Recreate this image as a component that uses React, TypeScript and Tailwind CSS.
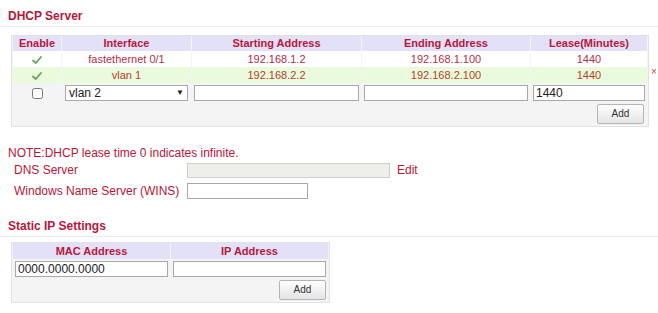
import React from "react"

// DHCP server settings page
const red = "text-[#b8163a]"

function Check() {
  return (
    <svg width="10" height="8" viewBox="0 0 10 8" className="inline-block align-middle">
      <path d="M1 4.5 L3.8 7 L9 1" fill="none" stroke="#6aa35a" strokeWidth="1.8" strokeLinecap="round" strokeLinejoin="round" />
    </svg>
  )
}

function AddButton() {
  return (
    <button className="block ml-auto h-[20px] w-[47px] rounded-[2px] border border-[#b4b4b4] bg-gradient-to-b from-white to-[#e4e4e4] text-[10px] leading-[18px] text-[#333]">
      Add
    </button>
  )
}

const inputCls = "block h-[16px] w-full border border-[#a9a9a9] bg-white px-[2px] text-[12px] leading-[14px] text-[#222] outline-none"

export default function App() {
  const th = `bg-[#e3e1f7] text-[11px] font-bold ${red} h-[15px] leading-[15px] text-center p-0`
  const td = "text-[11px] text-center h-[16px] leading-[16px] text-[#b03048] p-0"
  const td2 = "text-[11px] text-center h-[16px] leading-[16px] text-[#b8402e] p-0"
  return (
    <div className="w-[658px] h-[313px] bg-white font-['Liberation_Sans',Arial,sans-serif] overflow-hidden">
      {/* DHCP Server */}
      <div className="border-b border-[#ececec] pl-[8px] pt-[9px] pb-[3px]">
        <h2 className={`text-[12px] font-bold ${red} leading-[14px]`}>DHCP Server</h2>
      </div>

      <div className="relative ml-[11px] mt-[8px] w-[638px] border border-[#e2e2e2] bg-[#f4f4f4]">
        <table className="w-full table-fixed border-separate border-spacing-x-[1px] border-spacing-y-0 text-[12px] leading-[14px]">
          <colgroup>
            <col className="w-[48px]" />
            <col className="w-[129px]" />
            <col className="w-[169px]" />
            <col className="w-[168px]" />
            <col />
          </colgroup>
          <thead>
            <tr>
              <th className={th}>Enable</th>
              <th className={th}>Interface</th>
              <th className={th}>Starting Address</th>
              <th className={th}>Ending Address</th>
              <th className={th}>Lease(Minutes)</th>
            </tr>
          </thead>
          <tbody>
            <tr className="bg-white">
              <td className={td}><Check /></td>
              <td className={td}>fastethernet 0/1</td>
              <td className={td}>192.168.1.2</td>
              <td className={td}>192.168.1.100</td>
              <td className={td}>1440</td>
            </tr>
            <tr className="bg-[#e9fbdc]">
              <td className={td2}><Check /></td>
              <td className={td2}>vlan 1</td>
              <td className={td2}>192.168.2.2</td>
              <td className={td2}>192.168.2.100</td>
              <td className={td2}>1440</td>
            </tr>
            <tr>
              <td className="h-[19px] p-0 text-center align-middle leading-none">
                <input type="checkbox" className="h-[11px] w-[11px] align-middle accent-[#ccc]" />
              </td>
              <td className="h-[19px] px-[3px] py-0 align-middle">
                <div className="flex h-[16px] items-center justify-between border border-[#a9a9a9] bg-white px-[3px] text-[12px] text-[#222]">
                  <span>vlan 2</span>
                  <span className="text-[8px]">▼</span>
                </div>
              </td>
              <td className="h-[19px] px-[2px] py-0 align-middle"><input className={inputCls} /></td>
              <td className="h-[19px] px-[2px] py-0 align-middle"><input className={inputCls} /></td>
              <td className="h-[19px] px-[2px] py-0 align-middle"><input className={inputCls} defaultValue="1440" /></td>
            </tr>
            <tr>
              <td colSpan={5} className="h-[24px] p-0 pr-[3px] align-middle">
                <AddButton />
              </td>
            </tr>
          </tbody>
        </table>
        <span className="absolute left-[639px] top-[30px] text-[10px] leading-[12px] text-[#d04040]">×</span>
      </div>

      {/* notes and DNS */}
      <p className="mt-[19px] pl-[8px] text-[12px] leading-[14px] text-[#b8163a]">NOTE:DHCP lease time 0 indicates infinite.</p>
      <div className="mt-[1px] flex items-center pl-[14px] text-[12px] text-[#b8163a]">
        <span className="w-[173px]">DNS Server</span>
        <div className="h-[15px] w-[203px] border border-[#cfcfcf] bg-[#eeeeea]" />
        <span className="ml-[7px]">Edit</span>
      </div>
      <div className="mt-[3px] flex items-center pl-[14px] text-[12px] text-[#b8163a]">
        <span className="w-[173px]">Windows Name Server (WINS)</span>
        <div className="h-[16px] w-[121px] border border-[#a9a9a9] bg-white" />
      </div>

      {/* Static IP */}
      <div className="mt-[19px] border-b border-[#ececec] pl-[8px] pb-[3px]">
        <h2 className={`text-[12px] font-bold ${red} leading-[14px]`}>Static IP Settings</h2>
      </div>
      <div className="ml-[11px] mt-[5px] w-[319px] border border-[#e2e2e2] bg-[#f4f4f4]">
        <table className="w-full table-fixed border-separate border-spacing-x-[1px] border-spacing-y-0 text-[12px] leading-[14px]">
          <thead>
            <tr>
              <th className={`${th} h-[16px]`}>MAC Address</th>
              <th className={`${th} h-[16px]`}>IP Address</th>
            </tr>
          </thead>
          <tbody>
            <tr>
              <td className="h-[19px] px-[2px] py-0 align-middle"><input className={inputCls} defaultValue="0000.0000.0000" /></td>
              <td className="h-[19px] px-[2px] py-0 align-middle"><input className={inputCls} /></td>
            </tr>
            <tr>
              <td colSpan={2} className="h-[24px] p-0 pr-[2px] align-middle">
                <AddButton />
              </td>
            </tr>
          </tbody>
        </table>
      </div>
    </div>
  )
}
